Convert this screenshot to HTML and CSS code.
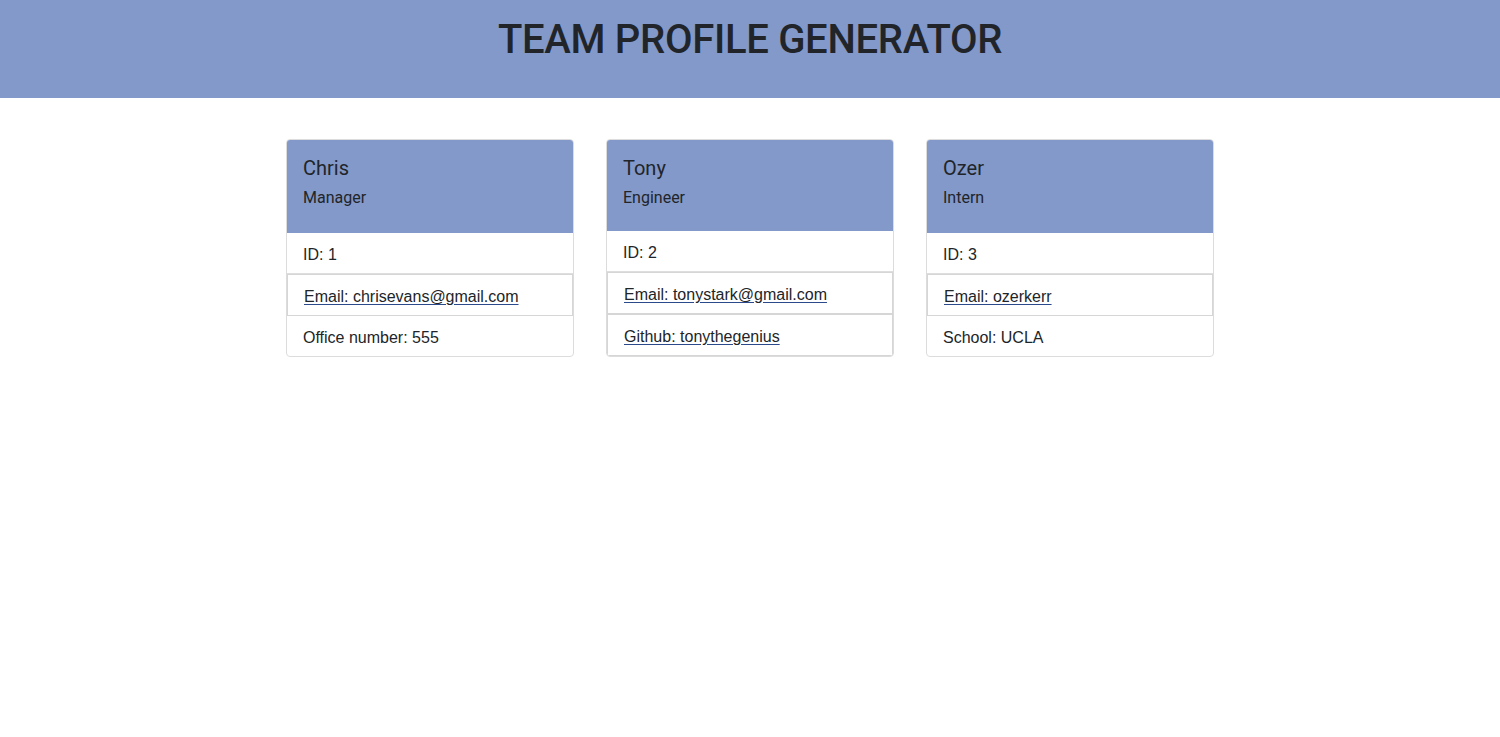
FILE: index.html
```html
<!DOCTYPE html>
<html lang="en">
<head>
<meta charset="utf-8">
<title>Team Profile Generator</title>
<link rel="stylesheet" href="styles.css">
</head>
<body>
<header class="top-bar">
  <h1 class="title">TEAM PROFILE GENERATOR</h1>
</header>
<main class="team">
  <div class="card">
    <div class="card-head">
      <h5 class="name">Chris</h5>
      <h6 class="role">Manager</h6>
    </div>
    <ul class="info">
      <li class="item">ID: 1</li>
      <li class="item link-item"><a class="box-link" href="#">Email: chrisevans@gmail.com</a></li>
      <li class="item last">Office number: 555</li>
    </ul>
  </div>
  <div class="card">
    <div class="card-head short">
      <h5 class="name">Tony</h5>
      <h6 class="role">Engineer</h6>
    </div>
    <ul class="info">
      <li class="item">ID: 2</li>
      <li class="item link-item"><a class="box-link" href="#">Email: tonystark@gmail.com</a></li>
      <li class="item link-item"><a class="box-link" href="#">Github: tonythegenius</a></li>
    </ul>
  </div>
  <div class="card">
    <div class="card-head">
      <h5 class="name">Ozer</h5>
      <h6 class="role">Intern</h6>
    </div>
    <ul class="info">
      <li class="item">ID: 3</li>
      <li class="item link-item"><a class="box-link" href="#">Email: ozerkerr</a></li>
      <li class="item last">School: UCLA</li>
    </ul>
  </div>
</main>
</body>
</html>
```

FILE: styles.css
```css
* { box-sizing: border-box; }

body {
  margin: 0;
  font-family: "Liberation Sans", Arial, sans-serif;
  font-size: 16px;
  color: #212529;
  background: #fff;
}

.top-bar {
  background: #8399c9;
  height: 98px;
  padding-top: 16px;
  text-align: center;
}

.title {
  margin: 0;
  font-family: Roboto, "Liberation Sans", sans-serif;
  font-size: 40px;
  line-height: 48px;
  font-weight: 500;
  letter-spacing: -0.3px;
  color: #212529;
}

.team {
  display: flex;
  justify-content: center;
  gap: 32px;
  margin-top: 41px;
}

.card {
  width: 288px;
  border: 1px solid #dcdcdc;
  border-radius: 4px;
  overflow: hidden;
  background: #fff;
}

.card-head {
  background: #8399c9;
  padding: 16px 16px 18px;
}

.card-head.short {
  padding-bottom: 16px;
}

.name {
  margin: 0 0 8px;
  font-family: Roboto, "Liberation Sans", sans-serif;
  font-size: 20px;
  line-height: 24px;
  font-weight: 400;
}

.role {
  margin: 0 0 8px;
  font-family: Roboto, "Liberation Sans", sans-serif;
  font-size: 16px;
  line-height: 19px;
  font-weight: 400;
}

.info {
  list-style: none;
  margin: 0;
  padding: 0;
}

.item {
  padding: 10px 16px 6px;
  line-height: 24px;
  border-bottom: 1px solid #dedede;
}

.item.last {
  border-bottom: 0;
}

.link-item {
  padding: 0;
  border-bottom: 0;
}

.box-link {
  display: block;
  padding: 10px 16px 6px;
  border: 1px solid #d6d6d6;
  color: #212529;
  text-decoration: underline;
  text-decoration-color: #2b4a8c;
  text-underline-offset: 2px;
}
```
